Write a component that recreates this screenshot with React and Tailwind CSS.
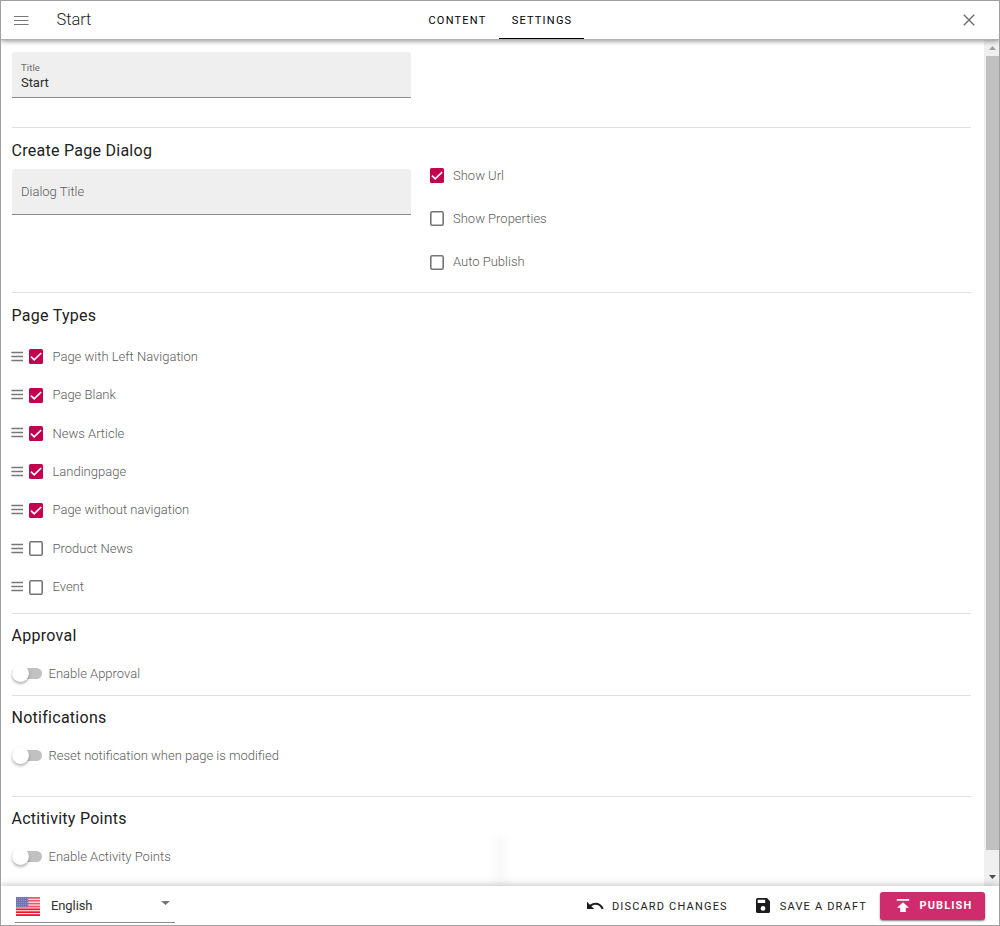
import React from "react";

const LABEL = "text-[13px] font-light leading-[18px] text-[#5c5c5c] whitespace-nowrap";

function Heading({ children }) {
  return (
    <h2 className="-ml-[0.5px] flex h-[45px] items-center text-[16px] leading-[20px] tracking-[0.27px] text-[#212121] whitespace-nowrap">
      {children}
    </h2>
  );
}

function SubHeading({ children }) {
  return (
    <h2 className="-ml-[0.5px] flex h-[44px] items-center pb-px text-[16px] leading-[20px] tracking-[0.27px] text-[#212121] whitespace-nowrap">
      {children}
    </h2>
  );
}

function Checkbox({ checked }) {
  return (
    <svg className="block shrink-0" width="14" height="15" viewBox="0 0 14 15">
      {checked ? (
        <>
          <rect width="14" height="15" rx="1.6" fill="#c2004f" />
          <path d="M1.9 7.7 5.2 10.9 12.2 4" fill="none" stroke="#fff" strokeWidth="1.7" />
        </>
      ) : (
        <rect x="0.8" y="0.8" width="12.4" height="13.4" rx="1.4" fill="none" stroke="#757575" strokeWidth="1.6" />
      )}
    </svg>
  );
}

function Grip() {
  return (
    <svg className="block shrink-0" width="12" height="11" viewBox="0 0 12 11">
      <path d="M.4 1.5H12M.4 5.5H12M.4 9.5H12" stroke="#777" strokeWidth="1.5" />
    </svg>
  );
}

function Toggle({ label }) {
  return (
    <div className="flex h-[31px] items-center">
      <div className="flex h-[11px] w-[30px] shrink-0 items-center rounded-full bg-[#c1c1c1]">
        <span className="size-[17px] shrink-0 rounded-full bg-white shadow-[0_2px_3px_rgba(0,0,0,0.3)]" />
      </div>
      <span className={"ml-[6.5px] " + LABEL}>{label}</span>
    </div>
  );
}

function Flag() {
  const stars = [];
  for (let r = 0; r < 5; r++)
    for (let c = 0; c < 6; c++)
      stars.push(<circle key={r + "-" + c} cx={1.3 + c * 2} cy={1.2 + r * 2} r="0.4" fill="#d8d8f0" />);
  return (
    <svg className="-mt-px -ml-[0.5px] block shrink-0" width="24" height="19" viewBox="0 0 24 19">
      <rect width="24" height="19" fill="#fff" />
      {[0, 1, 2, 3, 4, 5, 6].map((i) => (
        <rect key={i} y={i * 2.86} width="24" height="1.8" fill="#ee1430" />
      ))}
      <rect width="12.3" height="10.2" fill="#3b3b94" />
      {stars}
      <rect width="24" height="10" fill="#fff" fillOpacity="0.28" />
    </svg>
  );
}

const PAGE_TYPES = [
  ["Page with Left Navigation", true],
  ["Page Blank", true],
  ["News Article", true],
  ["Landingpage", true],
  ["Page without navigation", true],
  ["Product News", false],
  ["Event", false],
];

function Header() {
  return (
    <header className="relative z-10 grid h-[39px] shrink-0 grid-cols-[413px_170px_1fr] border-b border-[#b0b0b0] bg-white shadow-[0_1px_5px_rgba(0,0,0,0.45)]">
      <div className="flex items-center pl-[13px]">
        <svg width="15" height="11" viewBox="0 0 15 11">
          <path d="M0 1.5h14.5M0 5.5h14.5M0 9.5h14.5" stroke="#777" strokeWidth="1" />
        </svg>
        <h1 className="ml-[27.5px] text-[16.5px] font-light leading-[20px] tracking-[-0.1px] text-[#222]">Start</h1>
      </div>
      <nav className="flex text-[11px] tracking-[1.22px] text-black">
        <span className="flex w-[85px] items-center justify-center pt-[3px] pl-[2px]">CONTENT</span>
        <span className="flex w-[85px] items-center justify-center border-b border-black pt-[4px] pl-px">SETTINGS</span>
      </nav>
      <div className="flex items-center justify-end pr-[24px]">
        <svg width="12" height="12" viewBox="0 0 12 12">
          <path d="M.8.8 11.2 11.2M11.2.8.8 11.2" stroke="#6d6d6d" strokeWidth="1.4" />
        </svg>
      </div>
    </header>
  );
}

function Scrollbar() {
  return (
    <div className="flex w-[15px] shrink-0 flex-col bg-[#f0f0f0] pl-[2px]">
      <div className="flex h-[16px] items-center justify-center">
        <svg width="7" height="4" viewBox="0 0 7 4"><path d="M0 4 3.5 0 7 4z" fill="#a0a0a0" /></svg>
      </div>
      <div className="h-[794px] bg-[#c1c1c1]" />
      <div className="flex h-[36px] items-end justify-center pb-[7px]">
        <svg width="7" height="4" viewBox="0 0 7 4"><path d="M0 0 3.5 4 7 0z" fill="#505050" /></svg>
      </div>
    </div>
  );
}

function Footer() {
  return (
    <footer className="relative z-10 flex h-[39px] shrink-0 bg-white shadow-[0_-1px_7px_rgba(0,0,0,0.24)]">
      <div className="ml-[14px] flex h-[37px] w-[160px] items-center border-b border-[#8a8a8a] pl-[1px] pt-[6px]">
        <Flag />
        <span className="-mt-[3px] ml-[11.5px] text-[13px] leading-[18px] tracking-[-0.1px] text-[#333]">English</span>
        <svg className="-mt-[8px] ml-auto mr-[5px]" width="9" height="4" viewBox="0 0 9 4"><path d="M0 0h9L4.5 4z" fill="#757575" /></svg>
      </div>
      <div className="ml-auto flex items-center pr-[14px] pt-px text-[11px] text-[#222]">
        <svg className="-mt-px" width="17" height="10" viewBox="0 0 17 10">
          <path d="M0 .8V8h7.2L4.4 5.3C7.8 2.6 12.7 3.4 14.7 8.2L16.7 7.5C14.1 1.2 7.5.1 2.9 3.8z" fill="#1c1c1c" />
        </svg>
        <span className="ml-[8px] pt-[2px] tracking-[1.18px] whitespace-nowrap">DISCARD CHANGES</span>
        <svg className="-mt-px ml-[28px]" width="14" height="15" viewBox="0 0 14 15">
          <path fillRule="evenodd" d="M1.6 0H11L14 3.2V13.4Q14 15 12.4 15H1.6Q0 15 0 13.4V1.6Q0 0 1.6 0ZM1.7 1.8V5H9.2V1.8ZM7 8A2.4 2.4 0 1 0 7 12.8A2.4 2.4 0 1 0 7 8Z" fill="#1c1c1c" />
        </svg>
        <span className="ml-[10px] pt-[2px] tracking-[1.18px] whitespace-nowrap">SAVE A DRAFT</span>
        <button className="ml-[13px] flex h-[28px] w-[105px] items-center rounded-[3px] bg-[#cf2c6e] pl-[16px] text-white shadow-[0_1px_2px_rgba(0,0,0,0.5)]">
          <svg className="-mt-px" width="14" height="13" viewBox="0 0 14 13"><path d="M.8 0H13.2V1.8H.8ZM7 3.2 13 8.8H9.8V13H4.2V8.8H1z" fill="#fff" /></svg>
          <span className="ml-[9.5px] text-[11px] font-bold tracking-[1.1px]">PUBLISH</span>
        </button>
      </div>
    </footer>
  );
}

export default function App() {
  return (
    <div className="flex h-[926px] w-[1000px] flex-col overflow-hidden border border-[#a0a0a0] bg-white font-['Roboto',sans-serif]">
      <Header />
      <div className="flex h-[846px] shrink-0">
        <main className="relative min-w-0 flex-1 pl-[11px] pr-[12px]">
          <section className="h-[88px] w-[959px] border-b border-[#e0e0e0] pt-[12px]">
            <div className="flex h-[46px] w-[399px] flex-col rounded-t-[3px] border-b border-[#8a8a8a] bg-[#efefef] pl-[9px] pt-[9px]">
              <span className="text-[9.5px] leading-[13px] tracking-[0.1px] text-[#6c6c6c]">Title</span>
              <span className="text-[13px] leading-[17px] tracking-[-0.05px] text-[#2c2c2c]">Start</span>
            </div>
          </section>

          <section className="flex h-[165px] w-[959px] border-b border-[#e0e0e0]">
            <div className="w-[418px]">
              <Heading>Create Page Dialog</Heading>
              <div className="-mt-[4px] flex h-[46px] w-[399px] items-center rounded-t-[3px] border-b border-[#8a8a8a] bg-[#efefef] pl-[9px]">
                <span className={LABEL}>Dialog Title</span>
              </div>
            </div>
            <div className="flex flex-col pt-[26px]">
              {[["Show Url", true], ["Show Properties", false], ["Auto Publish", false]].map(([t, on]) => (
                <div key={t} className="flex h-[43.3px] items-center">
                  <Checkbox checked={on} />
                  <span className={"ml-[9px] " + LABEL}>{t}</span>
                </div>
              ))}
            </div>
          </section>

          <section className="h-[321px] w-[959px] border-b border-[#e0e0e0]">
            <Heading>Page Types</Heading>
            <ul className="-mt-[1px] -ml-[1px]">
              {PAGE_TYPES.map(([t, on]) => (
                <li key={t} className="flex h-[38.4px] items-center">
                  <Grip />
                  <span className="mt-px ml-[6px]"><Checkbox checked={on} /></span>
                  <span className={"mt-[1.4px] ml-[9.5px] " + LABEL}>{t}</span>
                </li>
              ))}
            </ul>
          </section>

          <section className="h-[82px] w-[959px] border-b border-[#e0e0e0]">
            <SubHeading>Approval</SubHeading>
            <Toggle label="Enable Approval" />
          </section>

          <section className="h-[101px] w-[959px] border-b border-[#e0e0e0]">
            <SubHeading>Notifications</SubHeading>
            <Toggle label="Reset notification when page is modified" />
          </section>

          <section className="w-[959px]">
            <SubHeading>Actitivity Points</SubHeading>
            <Toggle label="Enable Activity Points" />
          </section>

          <div className="absolute bottom-0 left-[496px] h-[50px] w-[8px] bg-black/4 blur-[5px]" />
        </main>
        <Scrollbar />
      </div>
      <Footer />
    </div>
  );
}
